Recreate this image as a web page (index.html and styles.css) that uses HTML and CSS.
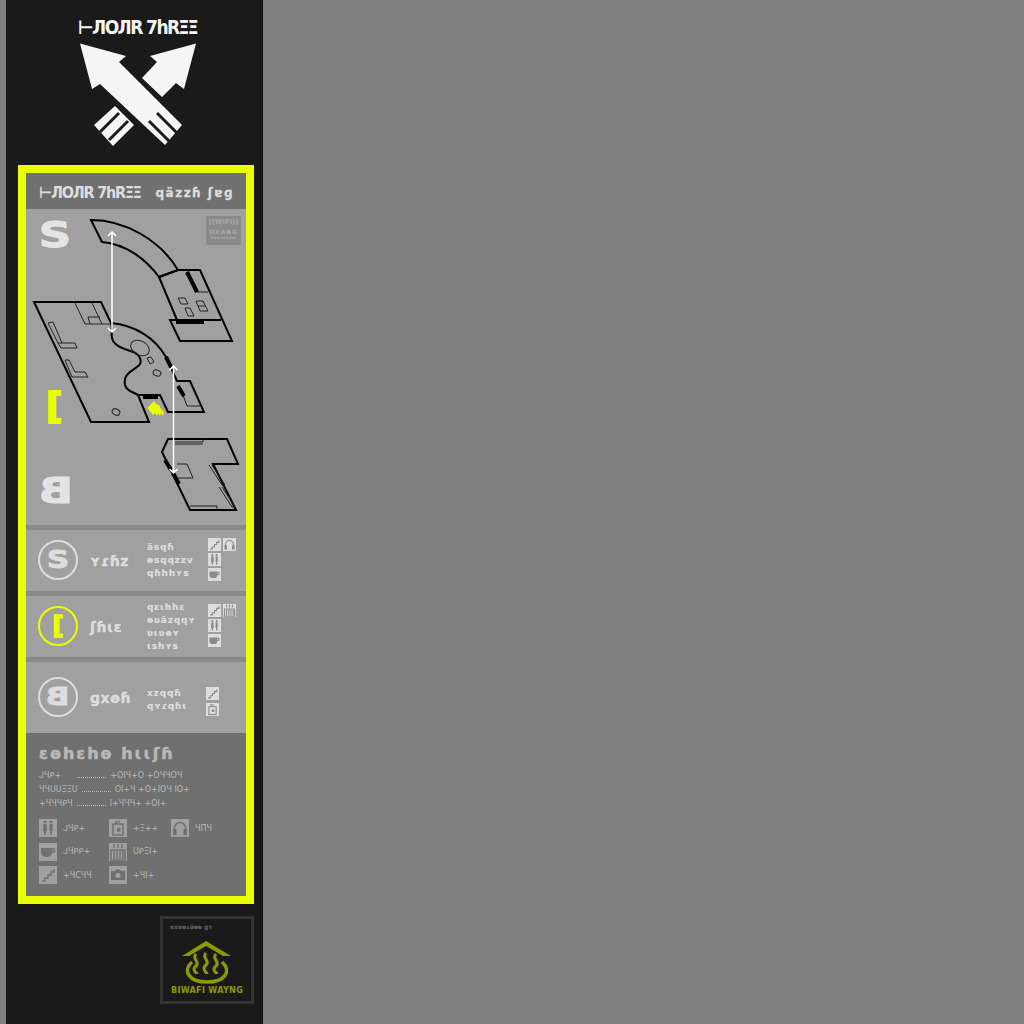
FILE: index.html
```html
<!DOCTYPE html>
<html lang="en">
<head>
<meta charset="utf-8">
<title>Floor Three</title>
<link rel="stylesheet" href="styles.css">
</head>
<body>
<svg class="defs" width="0" height="0" aria-hidden="true">
  <symbol id="i-stairs" viewBox="0 0 18 18"><path class="ln" d="M3 15h3v-3h3V9h3V6h3V3"/></symbol>
  <symbol id="i-phones" viewBox="0 0 18 18"><path class="ln" d="M3.500 11V9a5.500 5.500 0 0 1 11 0v2"/><rect class="fl" x="2" y="10" width="3.500" height="6"/><rect class="fl" x="12.500" y="10" width="3.500" height="6"/></symbol>
  <symbol id="i-wc" viewBox="0 0 18 18"><circle class="fl" cx="6" cy="3" r="1.500"/><circle class="fl" cx="12" cy="3" r="1.500"/><path class="fl" d="M4.500 5h3l.5 7H7v4H5v-4H4zM10.500 5h3v7h-.7v4h-1.600v-4h-.7z"/></symbol>
  <symbol id="i-cup" viewBox="0 0 18 18"><path class="fl" d="M2 5h11v4a5 5 0 0 1-5 5H7a5 5 0 0 1-5-5z"/><path class="ln" d="M13 6h2v3h-2"/></symbol>
  <symbol id="i-locker" viewBox="0 0 18 18"><rect class="ln" x="4" y="5" width="10" height="11"/><rect class="fl" x="8" y="9" width="3.500" height="3.500"/><path class="ln" d="M7 5V2.500h4"/></symbol>
  <symbol id="i-vend" viewBox="0 0 18 18"><path class="ln" d="M2 7h14v10H2zM5 8v8M8 8v8M11 8v8M14 8v8M5 1v4M9 1v4M13 1v4"/></symbol>
  <symbol id="i-cam" viewBox="0 0 18 18"><path class="fl" d="M2 5h4l1-1.500h4L12 5h4v9H2z"/><circle class="cut" cx="9" cy="9.500" r="2.500"/></symbol>
</svg>

<aside class="sidebar">
  <header class="brand">
    <h1 class="brand-title">⊢ЛOЛR 7hRΞΞ</h1>
    <svg class="brand-mark" viewBox="78 42 120 106" width="120" height="106" aria-hidden="true">
      <polygon class="mark" points="196,43.500 150,56 157,62 142,78 162,97 176,83 184,89"/>
      <polygon class="mark" points="115,106 134,125 113,146 94,125"/>
      <polygon class="mark" points="80,43.500 126,56 119,62 182,125 165,145 100,84 92,89"/>
      <path class="mark-cut" d="M157 113l20 20M149 121l20 20M119 113l-19 19M128 121l-19 19"/>
    </svg>
  </header>

  <main class="panel">
    <div class="panel-head">
      <span class="head-title">⊢ЛOЛR 7hRΞΞ</span>
      <span class="head-sub">qäzzɦ ʃɐɡ</span>
    </div>

    <section class="map">
      <span class="floor-mark floor-s">S</span>
      <span class="floor-mark floor-c">[</span>
      <span class="floor-mark floor-b">B</span>
      <div class="wifi">
        <span class="wifi-top">((WiFi))</span>
        <span class="wifi-mid">OXAAG</span>
        <span class="wifi-low">free access</span>
      </div>
      <svg class="map-svg" viewBox="26 209 220 316" width="220" height="316" aria-hidden="true">
        <g class="wall">
          <path d="M91 220C125 220 160 240 178 270L159 277C145 258 125 244 102 242Z"/>
          <path d="M159 277L178 270H200L232 341H180L170 320H221M159 277L177 320"/>
          <path d="M34 302H101L111 323C135 325 155 338 166 357L177 381H190L204 412H168L160 395H138L149 422H91Z"/>
          <path d="M111 323C113 330 110 335 113 341C120 352 135 348 140 358C145 370 122 368 125 385C127 392 134 392 138 395"/>
          <path d="M162 452L168 439H227L238 464H213L236 510H190Z"/>
        </g>
        <g class="wall-thin">
          <path d="M75 303L85 324H110M92 303L102 324M88 317H100M88 317L90 324"/>
          <path d="M48 323L53 322L62 343M48 323L58 343H75L77 348H61L58 343M65 360L69 360L75 372H85L88 377H72Z"/>
          <path d="M178 298H185L188 304H181ZM185 308H190L194 316H188ZM196 301H203L208 311H200ZM198 306H205"/>
          <path d="M197 292H208M183 395L187 406H200"/>
          <path d="M175 442H203V439M175 444H203M177 464H187L193 478H178M209 465L222 485H225L212 465M219 487L232 507H235L222 487M190 506H217V510"/>
          <ellipse cx="140" cy="348" rx="10" ry="7" transform="rotate(30 140 348)"/>
          <ellipse cx="157" cy="373" rx="4" ry="3" transform="rotate(20 157 373)"/>
          <ellipse cx="116" cy="412" rx="4" ry="3" transform="rotate(25 116 412)"/>
          <path d="M147 358L151 357L154 362L150 364Z"/>
        </g>
        <g class="wall-bold">
          <path d="M187 272L197 292"/>
          <path d="M176 322H204"/>
          <path d="M166 357L171 367M178 386L184 396"/>
          <path d="M143 397H158"/>
          <path d="M165 460L171 470M173 473L179 484"/>
        </g>
        <g class="route">
          <path d="M112 232V332M108 236L112 232L116 236M108 328L112 332L116 328"/>
          <path d="M173.500 366V473M169.500 370L173.500 366L177.500 370M169.500 469L173.500 473L177.500 469"/>
        </g>
        <path class="hand" d="M147.500 408L154 401L156 404L159 405L161 409L164 412L163 416L161 413L160 416L158 413L157 416L155 413L153 415Z"/>
      </svg>
    </section>

    <section class="floor-row">
      <span class="ring"><span class="wide">S</span></span>
      <span class="floor-name">ʏɾɦz</span>
      <ul class="places"><li>äsqɦ</li><li>ɵsqqzzv</li><li>qɦhhʏs</li></ul>
      <div class="mini-icons">
        <span class="mini"><svg><use href="#i-stairs"/></svg></span>
        <span class="mini"><svg><use href="#i-phones"/></svg></span>
        <span class="mini"><svg><use href="#i-wc"/></svg></span>
        <span class="mini-gap"></span>
        <span class="mini"><svg><use href="#i-cup"/></svg></span>
      </div>
    </section>

    <section class="floor-row">
      <span class="ring ring-on">[</span>
      <span class="floor-name">ʃɦɩɛ</span>
      <ul class="places"><li>qɛɩhhɛ</li><li>ɵʋäzqqʏ</li><li>ʋɩʋɵʏ</li><li>ɩshʏs</li></ul>
      <div class="mini-icons">
        <span class="mini"><svg><use href="#i-stairs"/></svg></span>
        <span class="mini"><svg><use href="#i-vend"/></svg></span>
        <span class="mini"><svg><use href="#i-wc"/></svg></span>
        <span class="mini-gap"></span>
        <span class="mini"><svg><use href="#i-cup"/></svg></span>
      </div>
    </section>

    <section class="floor-row floor-row-tall">
      <span class="ring ring-b"><span class="flip">B</span></span>
      <span class="floor-name">ɡxɵɦ</span>
      <ul class="places places-low"><li>xzqqɦ</li><li>qʏɾqɦɩ</li></ul>
      <div class="mini-icons mini-icons-low">
        <span class="mini"><svg><use href="#i-stairs"/></svg></span>
        <span class="mini-gap"></span>
        <span class="mini"><svg><use href="#i-locker"/></svg></span>
      </div>
    </section>

    <section class="legend">
      <h2 class="legend-title">ɛɵhɛhɵ hɩɩʃɦ</h2>
      <div class="hours">
        <div class="hour"><span class="h-name">ᒍЧᑭ+</span><span class="h-dots h-dots-a"></span><span class="h-val">+OIЧ+O +OЧЧOЧ</span></div>
        <div class="hour"><span class="h-name">ЧЧUUΞΞU</span><span class="h-dots"></span><span class="h-val">OI+Ч +O+IOЧ IO+</span></div>
        <div class="hour"><span class="h-name">+ЧЧЧᑭЧ</span><span class="h-dots"></span><span class="h-val">I+ЧЧЧ+ +OI+</span></div>
      </div>
      <div class="key">
        <div class="key-item"><span class="key-icon"><svg><use href="#i-wc"/></svg></span><span>ᒍЧᑭ+</span></div>
        <div class="key-item"><span class="key-icon"><svg><use href="#i-locker"/></svg></span><span>+Ξ++</span></div>
        <div class="key-item"><span class="key-icon"><svg><use href="#i-phones"/></svg></span><span>ЧПЧ</span></div>
        <div class="key-item"><span class="key-icon"><svg><use href="#i-cup"/></svg></span><span>ᒍЧᑭᑭ+</span></div>
        <div class="key-item"><span class="key-icon"><svg><use href="#i-vend"/></svg></span><span>UᑭΞI+</span></div>
        <div class="key-item"></div>
        <div class="key-item"><span class="key-icon"><svg><use href="#i-stairs"/></svg></span><span>+ЧCЧЧ</span></div>
        <div class="key-item"><span class="key-icon"><svg><use href="#i-cam"/></svg></span><span>+ЧI+</span></div>
      </div>
    </section>
  </main>

  <footer class="stamp-wrap">
    <div class="stamp">
      <span class="stamp-top">ɐxɐɵɾäɵɵ ɡʏ</span>
      <svg class="stamp-logo" viewBox="182 939 52 44" width="52" height="44" aria-hidden="true">
        <polygon class="st-fill" points="207,940 232,955 224,955 207,945 190,955 183,955"/>
        <path class="st-line" d="M197 953c-5 5 5 8 0 12s1 7 1 8M207 952c-5 5 5 8 0 12s1 8 1 9M217 953c-5 5 5 8 0 12s1 7 1 8"/>
        <path class="st-bowl" d="M193 961C183 970 190 981 208 981S233 970 223 961"/>
      </svg>
      <span class="stamp-name">BIWAFI WAYNG</span>
    </div>
  </footer>
</aside>
</body>
</html>
```

FILE: styles.css
```css
* { box-sizing: border-box; }
html, body { margin: 0; height: 100%; }
body {
  background: #808080;
  overflow: hidden;
  font-family: "DejaVu Sans", "Noto Sans", sans-serif;
}
.defs { display: block; height: 0; }
.sidebar {
  margin-left: 6px;
  width: 257px;
  height: 1024px;
  background: #1a1a1a;
  border-right: 1px solid #111;
  display: flex;
  flex-direction: column;
  align-items: stretch;
}
.brand { height: 165px; display: flex; flex-direction: column; align-items: center; padding: 16px 0 0 7px; }
.brand-title {
  margin: 0;
  height: 26px;
  color: #f5f5f5;
  font-family: "DejaVu Sans Condensed", "DejaVu Sans", sans-serif;
  font-size: 19px;
  line-height: 22px;
  font-weight: 700;
  letter-spacing: -1.600px;
  white-space: nowrap;
}
.brand-mark { display: block; }
.mark { fill: #f5f5f5; }
.mark-cut { stroke: #1a1a1a; stroke-width: 3; fill: none; }

.panel {
  margin: 0 9px 0 12px;
  width: 236px;
  height: 739px;
  border: 8px solid #e9ff00;
  background: #8a8a8a;
  display: flex;
  flex-direction: column;
  gap: 5px;
}
.panel-head {
  height: 36px;
  margin-bottom: -5px;
  background: #707070;
  display: flex;
  align-items: center;
  padding: 3px 12px 0 13px;
  justify-content: space-between;
  color: #ddd;
  font-weight: 700;
  white-space: nowrap;
}
.head-title { font-family: "DejaVu Sans Condensed", "DejaVu Sans", sans-serif; font-size: 16px; letter-spacing: -1.200px; }
.head-sub { font-size: 12px; letter-spacing: 1.500px; -webkit-text-stroke: .3px #ddd; }

.map { position: relative; height: 316px; background: #a0a0a0; }
.map-svg { position: absolute; left: 0; top: 0; display: block; }
.wall { fill: none; stroke: #000; stroke-width: 2; stroke-linejoin: miter; }
.wall-thin { fill: none; stroke: #222; stroke-width: 1; }
.wall-bold { fill: none; stroke: #000; stroke-width: 4; }
.route { fill: none; stroke: #fff; stroke-width: 1.500; }
.hand { fill: #e9ff00; }
.floor-mark {
  position: absolute;
  font-weight: 700;
  line-height: 1;
  color: #e4e4e4;
  z-index: 1;
  -webkit-text-stroke: 1px currentColor;
}
.floor-s { left: 16px; top: 8px; font-size: 36px; transform: scaleX(1.250); }
.floor-c { left: 20px; top: 179px; font-size: 36px; color: #e9ff00; -webkit-text-stroke: 2px currentColor; }
.floor-b { left: 16px; top: 264px; font-size: 36px; transform: scaleX(-1.250); }
.wifi {
  position: absolute;
  right: 5px;
  top: 7px;
  width: 35px;
  height: 29px;
  background: #8a8a8a;
  color: #a8a8a8;
  display: flex;
  flex-direction: column;
  align-items: center;
  line-height: 1;
  padding-top: 3px;
  font-weight: 700;
}
.wifi-top { font-size: 7px; white-space: nowrap; }
.wifi-mid { font-size: 6px; margin-top: 3px; letter-spacing: 1px; }
.wifi-low { font-size: 4px; margin-top: 1px; white-space: nowrap; }

.floor-row {
  height: 61px;
  background: #a0a0a0;
  display: grid;
  grid-template-columns: 40px 69px 59px 1fr;
  align-items: center;
  padding-left: 12px;
  color: #ddd;
  font-weight: 700;
}
.floor-row-tall { height: 71px; margin-bottom: -5px; }
.ring {
  width: 40px;
  height: 40px;
  margin-top: -2px;
  border: 2px solid #ddd;
  border-radius: 50%;
  display: flex;
  align-items: center;
  justify-content: center;
  font-size: 25px;
  line-height: 1;
  color: #ddd;
  -webkit-text-stroke: .8px currentColor;
}
.ring-on { border-color: #e9ff00; color: #e9ff00; -webkit-text-stroke: 1.500px currentColor; }
.flip { display: block; transform: scaleX(-1.250); }
.wide { display: block; transform: scaleX(1.250); }
.floor-name { padding-left: 12px; font-size: 14px; letter-spacing: .6px; white-space: nowrap; -webkit-text-stroke: .4px currentColor; }
.places { list-style: none; margin: 0; padding: 0; font-size: 9px; line-height: 13px; letter-spacing: .8px; white-space: nowrap; -webkit-text-stroke: .2px currentColor; }
.places-low { padding-top: 4px; }
.mini-icons {
  display: grid;
  grid-template-columns: 13px 13px;
  gap: 2px 2px;
  justify-content: start;
  padding-left: 2px;
  margin-top: -3px;
}
.mini-icons-low { padding-left: 0; padding-top: 8px; margin-top: 0; gap: 3px 2px; }
.mini, .key-icon { display: block; }
.mini { width: 13px; height: 13px; background: #ddd; --ic: #8a8a8a; }
.mini svg, .key-icon svg { display: block; width: 100%; height: 100%; }
.mini-gap { display: block; }
.ln { fill: none; stroke: var(--ic); stroke-width: 1.500; }
.fl { fill: var(--ic); }
.cut { fill: var(--bgc); }

.legend {
  flex: 1;
  background: #707070;
  padding: 11px 12px 0 13px;
  color: #b8b8b8;
}
.legend-title { margin: 0; font-size: 16px; line-height: 20px; color: #b8b8b8; font-weight: 700; letter-spacing: 2px; white-space: nowrap; -webkit-text-stroke: .5px currentColor; }
.hours { margin-top: 5px; font-size: 8px; line-height: 14px; }
.hour { display: flex; align-items: center; white-space: nowrap; height: 14px; }
.h-name { display: block; }
.h-dots { display: block; width: 29px; height: 1px; margin: 3px 4px 0; border-top: 1px dotted #b8b8b8; }
.h-dots-a { margin-left: 16px; }
.key {
  margin-top: 8px;
  display: grid;
  grid-template-columns: 70px 62px 1fr;
  grid-auto-rows: 18px;
  row-gap: 5.500px;
  font-size: 8px;
}
.key-item { display: flex; align-items: center; gap: 6px; white-space: nowrap; }
.key-icon { width: 18px; height: 18px; background: #a0a0a0; --ic: #707070; --bgc: #a0a0a0; flex: none; }

.stamp-wrap { display: flex; justify-content: flex-end; padding: 12px 8px 0 0; }
.stamp {
  width: 94px;
  height: 88px;
  border: 3px solid #333;
  display: flex;
  flex-direction: column;
  align-items: center;
  padding-top: 3px;
  background: #1a1a1a;
}
.stamp-top { align-self: flex-start; padding-left: 7px; font-size: 6px; line-height: 9px; color: #666; font-weight: 700; white-space: nowrap; }
.stamp-logo { display: block; margin-top: 9px; }
.st-fill { fill: #8a9a00; }
.st-line { fill: none; stroke: #8a9a00; stroke-width: 3; }
.st-bowl { fill: none; stroke: #8a9a00; stroke-width: 3.500; }
.stamp-name { margin-top: 1px; font-size: 9px; line-height: 11px; color: #8a9a00; white-space: nowrap; letter-spacing: .3px; font-weight: 700; font-family: "DejaVu Sans Condensed", "DejaVu Sans", sans-serif; }
```
